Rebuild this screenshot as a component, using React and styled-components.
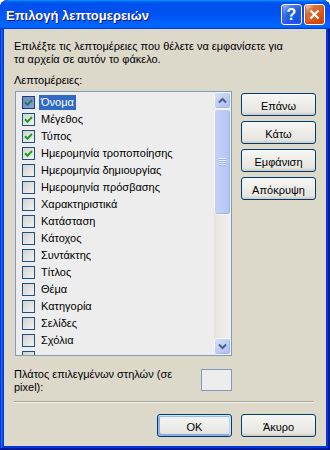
import React from "react";
import styled, { createGlobalStyle } from "styled-components";

const GlobalStyle = createGlobalStyle`
  html, body { margin: 0; padding: 0; background: #ffffff; }
  body { font-family: "Liberation Sans", "DejaVu Sans", Arial, sans-serif; font-size: 11px; }
  * { box-sizing: border-box; }
`;

const CLIENT = "#DCD8CA";
const FIELD = "#EDEDED";

const Window = styled.div`
  width: 330px;
  height: 450px;
  display: flex;
  flex-direction: column;
  background: #0831d9;
  border-radius: 8px 8px 0 0;
  overflow: hidden;
  box-shadow: inset -1px -1px #00138c, inset 1px 1px #0831d9, inset -2px -2px #001ea0,
    inset 2px 2px #166aee, inset -3px -3px #003bda, inset 3px 3px #0855dd;
`;

const TitleBar = styled.div`
  height: 29px;
  flex: none;
  display: flex;
  align-items: center;
  justify-content: space-between;
  padding: 0 5px 0 6px;
  background: linear-gradient(
    180deg,
    #0997ff 0%,
    #0053ee 8%,
    #0050ee 40%,
    #06f 88%,
    #06f 93%,
    #005bff 95%,
    #003dd7 96%,
    #003dd7 100%
  );
  border-radius: 8px 8px 0 0;
`;

const Title = styled.div`
  color: #ffffff;
  font-family: "Liberation Sans", "DejaVu Sans", sans-serif;
  font-weight: bold;
  font-size: 13px;
  text-shadow: 1px 1px #0f1089;
  padding-top: 1px;
`;

const TitleButtons = styled.div`
  display: flex;
  gap: 2px;
`;

const CaptionButton = styled.div`
  width: 21px;
  height: 21px;
  border: 1px solid #ffffff;
  border-radius: 3px;
  display: flex;
  align-items: center;
  justify-content: center;
  color: #ffffff;
  background: ${(p) =>
    p.$close
      ? "radial-gradient(circle at 90% 90%, #cc4600 0%, #dc6527 55%, #cd7546 70%, #ffccb2 90%, #fff 100%)"
      : "radial-gradient(circle at 90% 90%, #0054e9 0%, #2263d5 55%, #4479e4 70%, #a3bbec 90%, #fff 100%)"};
  box-shadow: ${(p) => (p.$close ? "inset 0 -1px 2px 1px #da4600" : "inset 0 -1px 2px 1px #4646ff")};
`;

const HelpGlyph = styled.span`
  font-family: "Liberation Sans", sans-serif;
  font-weight: bold;
  font-size: 16px;
  line-height: 16px;
  color: #ffffff;
`;

const Client = styled.div`
  flex: 1;
  margin: 0 4px 4px 4px;
  background: ${CLIENT};
  padding: 11px 10px 0 10px;
  display: flex;
  flex-direction: column;
  color: #000000;
`;

const Text = styled.div`
  font-size: 11px;
  line-height: 13px;
  margin-top: ${(p) => p.$mt || 0}px;
  white-space: nowrap;
`;

const MainRow = styled.div`
  display: flex;
  align-items: flex-start;
  gap: 9px;
  margin-top: 4px;
  padding-left: 1px;
`;

const ListBox = styled.div`
  width: 217px;
  height: 265px;
  border: 1px solid #7f9db9;
  background: ${FIELD};
  display: flex;
`;

const Items = styled.div`
  flex: 1;
  overflow: hidden;
  padding-top: 2px;
`;

const Row = styled.div`
  height: 17px;
  display: flex;
  align-items: flex-start;
  padding-left: 6px;
  white-space: nowrap;
`;

const Check = styled.div`
  width: 13px;
  height: 13px;
  margin-top: 2px;
  flex: none;
  border: 1px solid ${(p) => (p.$sel ? "#1d3f7e" : "#1c5180")};
  background: ${(p) =>
    p.$sel ? "linear-gradient(135deg, #6f88bd, #8aa2d2)" : "linear-gradient(135deg, #d2d2cd, #f2f2f2)"};
  display: flex;
  align-items: center;
  justify-content: center;
`;

const ItemLabel = styled.span`
  margin-left: 4px;
  margin-top: 1px;
  padding: 0 2px;
  line-height: 15px;
  height: 15px;
  color: ${(p) => (p.$sel ? "#ffffff" : "#000000")};
  background: ${(p) => (p.$sel ? "#316ac5" : "transparent")};
`;

const ScrollBar = styled.div`
  width: 17px;
  flex: none;
  display: flex;
  flex-direction: column;
  background: linear-gradient(90deg, #e4e3dc, #e9e7e2 30%, #f1f1ee);
`;

const ArrowButton = styled.div`
  width: 17px;
  height: 17px;
  flex: none;
  border: 1px solid #f4f6fc;
  border-radius: 3px;
  background: linear-gradient(135deg, #d3def8 0%, #bfcef4 50%, #aabfef 100%);
  box-shadow: inset -1px -1px #a2b7e6;
  display: flex;
  align-items: center;
  justify-content: center;
`;

const Track = styled.div`
  flex: 1;
  display: flex;
  flex-direction: column;
`;

const Thumb = styled.div`
  height: 106px;
  border: 1px solid #f4f6fc;
  border-radius: 3px;
  background: linear-gradient(90deg, #c3d1f4 0%, #bccdf5 50%, #b0c4f2 100%);
  box-shadow: inset -1px -1px #a0b6e6;
  display: flex;
  align-items: center;
  justify-content: center;
`;

const Grip = styled.div`
  width: 7px;
  height: 8px;
  background: repeating-linear-gradient(180deg, #eef4fe 0 1px, #8cb0f8 1px 2px);
`;

const SideButtons = styled.div`
  display: flex;
  flex-direction: column;
  gap: 5px;
  padding-top: 2px;
`;

const Button = styled.div`
  width: 75px;
  height: 23px;
  border: 1px solid #003c74;
  border-radius: 3px;
  background: linear-gradient(180deg, #f6f6f4 0%, #e6e5df 86%, #cec8bd 100%);
  display: flex;
  align-items: center;
  justify-content: center;
  padding-top: 3px;
  line-height: 13px;
  font-size: 11px;
  color: #000000;
  box-shadow: ${(p) =>
    p.$default
      ? "inset -1px 1px #cee7ff, inset 1px 2px #98b8ea, inset -2px 2px #bcd4f6, inset 1px -1px #89ade4, inset 2px -2px #89ade4"
      : "none"};
`;

const WidthRow = styled.div`
  width: 218px;
  display: flex;
  justify-content: space-between;
  align-items: flex-start;
  margin-top: 12px;
`;

const WidthInput = styled.div`
  width: 31px;
  height: 22px;
  margin-top: 1px;
  border: 1px solid #7f9db9;
  background: ${FIELD};
`;

const Separator = styled.div`
  height: 2px;
  margin: 7px 3px 0 0;
  border-top: 1px solid #a8a596;
  border-bottom: 1px solid #f4f4f0;
`;

const Footer = styled.div`
  display: flex;
  justify-content: flex-end;
  gap: 9px;
  margin-top: 11px;
`;

const CheckMark = ({ color }) => (
  <svg width="9" height="9" viewBox="0 0 9 9">
    <path d="M1 4.2 L3.5 6.7 L8 2" fill="none" stroke={color} strokeWidth="2" />
  </svg>
);

const Chevron = ({ down }) => (
  <svg width="9" height="7" viewBox="0 0 9 7">
    <path
      d={down ? "M1 1.5 L4.5 5 L8 1.5" : "M1 5.5 L4.5 2 L8 5.5"}
      fill="none"
      stroke="#4d6185"
      strokeWidth="2"
    />
  </svg>
);

const items = [
  { label: "Όνομα", checked: true, selected: true },
  { label: "Μέγεθος", checked: true },
  { label: "Τύπος", checked: true },
  { label: "Ημερομηνία τροποποίησης", checked: true },
  { label: "Ημερομηνία δημιουργίας" },
  { label: "Ημερομηνία πρόσβασης" },
  { label: "Χαρακτηριστικά" },
  { label: "Κατάσταση" },
  { label: "Κάτοχος" },
  { label: "Συντάκτης" },
  { label: "Τίτλος" },
  { label: "Θέμα" },
  { label: "Κατηγορία" },
  { label: "Σελίδες" },
  { label: "Σχόλια" },
  { label: "" },
];

export default function App() {
  return (
    <>
      <GlobalStyle />
      <Window>
        <TitleBar>
          <Title>Επιλογή λεπτομερειών</Title>
          <TitleButtons>
            <CaptionButton>
              <HelpGlyph>?</HelpGlyph>
            </CaptionButton>
            <CaptionButton $close>
              <svg width="11" height="11" viewBox="0 0 11 11">
                <path d="M1.5 1.5 L9.5 9.5 M9.5 1.5 L1.5 9.5" stroke="#ffffff" strokeWidth="2.2" />
              </svg>
            </CaptionButton>
          </TitleButtons>
        </TitleBar>
        <Client>
          <Text>
            Επιλέξτε τις λεπτομέρειες που θέλετε να εμφανίσετε για
            <br />
            τα αρχεία σε αυτόν το φάκελο.
          </Text>
          <Text $mt={8}>Λεπτομέρειες:</Text>
          <MainRow>
            <ListBox>
              <Items>
                {items.map((it, i) => (
                  <Row key={i}>
                    <Check $sel={it.selected}>
                      {it.checked && <CheckMark color={it.selected ? "#1f7d63" : "#21a121"} />}
                    </Check>
                    {it.label && <ItemLabel $sel={it.selected}>{it.label}</ItemLabel>}
                  </Row>
                ))}
              </Items>
              <ScrollBar>
                <ArrowButton>
                  <Chevron />
                </ArrowButton>
                <Track>
                  <Thumb>
                    <Grip />
                  </Thumb>
                </Track>
                <ArrowButton>
                  <Chevron down />
                </ArrowButton>
              </ScrollBar>
            </ListBox>
            <SideButtons>
              <Button>Επάνω</Button>
              <Button>Κάτω</Button>
              <Button>Εμφάνιση</Button>
              <Button>Απόκρυψη</Button>
            </SideButtons>
          </MainRow>
          <WidthRow>
            <Text>
              Πλάτος επιλεγμένων στηλών (σε
              <br />
              pixel):
            </Text>
            <WidthInput />
          </WidthRow>
          <Separator />
          <Footer>
            <Button $default>OK</Button>
            <Button>Άκυρο</Button>
          </Footer>
        </Client>
      </Window>
    </>
  );
}
